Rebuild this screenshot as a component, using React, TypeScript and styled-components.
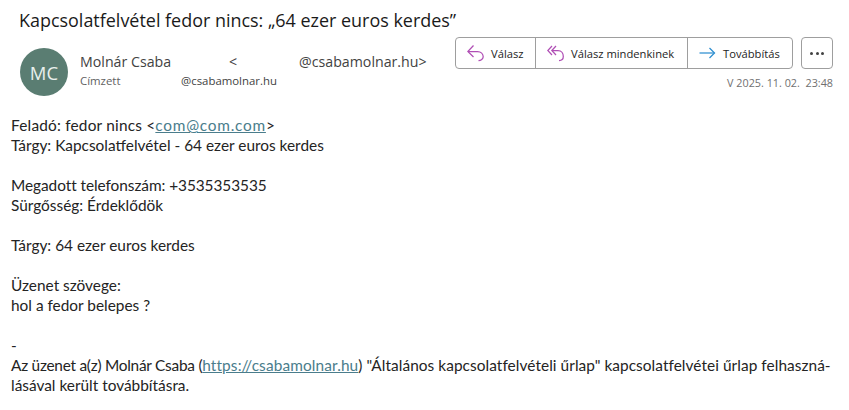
import React from 'react';
import styled, { createGlobalStyle } from 'styled-components';

const GlobalStyle = createGlobalStyle`
  html, body {
    margin: 0;
    padding: 0;
    background: #fff;
  }
`;

const Page = styled.div`
  width: 849px;
  height: 410px;
  overflow: hidden;
  font-family: 'Open Sans', 'Noto Sans', sans-serif;
  color: #242424;
`;

const Subject = styled.h1`
  margin: 0;
  padding: 8px 0 0 19px;
  height: 37px;
  box-sizing: border-box;
  font-size: 17.95px;
  line-height: 24px;
  font-weight: 400;
  color: #1a1a1a;
  white-space: nowrap;
`;

const Header = styled.div`
  display: flex;
  padding: 0 16px 0 20px;
`;

const Avatar = styled.div`
  width: 48px;
  height: 48px;
  margin-top: 11px;
  border-radius: 50%;
  background: #5a7d72;
  color: #e8efec;
  display: flex;
  align-items: center;
  justify-content: center;
  font-size: 18.5px;
  flex: none;
`;

const Meta = styled.div`
  margin-left: 12px;
  padding-top: 15px;
  flex: 1;
`;

const SenderRow = styled.div`
  display: flex;
  font-size: 14.2px;
  line-height: 20px;
  color: #424242;
  white-space: nowrap;
`;

const SenderName = styled.span`
  width: 149px;
`;

const SenderAngle = styled.span`
  width: 70px;
`;

const RecipientRow = styled.div`
  display: flex;
  font-size: 11.4px;
  line-height: 16px;
  margin-top: 1px;
  white-space: nowrap;
`;

const RecipientLabel = styled.span`
  width: 101px;
  color: #616161;
`;

const RecipientMail = styled.span`
  color: #424242;
`;

const Side = styled.div`
  display: flex;
  flex-direction: column;
  align-items: flex-end;
`;

const Actions = styled.div`
  display: flex;
  gap: 8px;
`;

const ButtonGroup = styled.div`
  display: flex;
  height: 32px;
  box-sizing: border-box;
  border: 1px solid #9e9e9e;
  border-radius: 4px;
`;

const ActionButton = styled.div<{ $width: number }>`
  width: ${p => p.$width}px;
  display: flex;
  align-items: center;
  gap: 6px;
  padding-left: 11px;
  box-sizing: border-box;
  font-size: 11.2px;
  color: #242424;
  white-space: nowrap;

  & + & {
    border-left: 1px solid #9e9e9e;
  }
`;

const MoreButton = styled.div`
  width: 32px;
  height: 32px;
  box-sizing: border-box;
  border: 1px solid #9e9e9e;
  border-radius: 4px;
  display: flex;
  align-items: center;
  justify-content: center;
  gap: 2.5px;
`;

const Dot = styled.span`
  width: 3px;
  height: 3px;
  border-radius: 50%;
  background: #424242;
`;

const Timestamp = styled.div`
  margin-top: 6px;
  font-size: 10.8px;
  line-height: 16px;
  color: #707070;
  white-space: pre;
`;

const Body = styled.div`
  padding: 19px 0 0 11px;
  font-family: 'Lato', 'Inter', sans-serif;
  font-size: 15.4px;
  line-height: 20px;
  color: #242424;
`;

const Para = styled.p`
  margin: 0 0 20px;
  white-space: nowrap;
`;

const Run = styled.span<{ $spacing: number }>`
  letter-spacing: ${p => p.$spacing}px;
`;

const MailLink = styled.a<{ $spacing: number }>`
  color: #4a7d8c;
  text-decoration: underline;
  letter-spacing: ${p => p.$spacing}px;
`;

const ReplyIcon = () => (
  <svg width="18" height="18" viewBox="0 0 18 18" fill="none" stroke="#b04fb5" strokeWidth="1.25">
    <path d="M6.5 1.5 L0.8 7.5 L6.5 13" />
    <path d="M1 7.5 H10.5 C14 7.5 16.2 10 16.2 12.8 C16.2 14.8 14 16.5 11.5 16.5" />
  </svg>
);

const ReplyAllIcon = () => (
  <svg width="18" height="18" viewBox="0 0 18 18" fill="none" stroke="#b04fb5" strokeWidth="1.25">
    <path d="M5 2 L0.8 6.5 L5 11" />
    <path d="M9 2 L4.8 6.5 L9 11" />
    <path d="M5 6.5 H11 C14.5 6.5 16.3 9.5 16.3 12.5 C16.3 14.8 14.5 16.5 12 16.5" />
  </svg>
);

const ForwardIcon = () => (
  <svg width="18" height="18" viewBox="0 0 18 18" fill="none" stroke="#2f8fd0" strokeWidth="1.25">
    <path d="M0.5 9 H15.5" />
    <path d="M10.5 4 L15.5 9 L10.5 14" />
  </svg>
);

export default function App() {
  return (
    <Page>
      <GlobalStyle />
      <Subject>Kapcsolatfelvétel fedor nincs: „64 ezer euros kerdes”</Subject>
      <Header>
        <Avatar>MC</Avatar>
        <Meta>
          <SenderRow>
            <SenderName>Molnár Csaba</SenderName>
            <SenderAngle>&lt;</SenderAngle>
            <span>@csabamolnar.hu&gt;</span>
          </SenderRow>
          <RecipientRow>
            <RecipientLabel>Címzett</RecipientLabel>
            <RecipientMail>@csabamolnar.hu</RecipientMail>
          </RecipientRow>
        </Meta>
        <Side>
          <Actions>
            <ButtonGroup>
              <ActionButton $width={79}><ReplyIcon />Válasz</ActionButton>
              <ActionButton $width={152}><ReplyAllIcon />Válasz mindenkinek</ActionButton>
              <ActionButton $width={105}><ForwardIcon />Továbbítás</ActionButton>
            </ButtonGroup>
            <MoreButton><Dot /><Dot /><Dot /></MoreButton>
          </Actions>
          <Timestamp>V 2025. 11. 02.  23:48</Timestamp>
        </Side>
      </Header>
      <Body>
        <Para>
          <Run $spacing={0.2}>Feladó: fedor nincs &lt;</Run><MailLink href="#" $spacing={0.75}>com@com.com</MailLink>&gt;<br />
          Tárgy: Kapcsolatfelvétel - 64 ezer euros kerdes
        </Para>
        <Para>
          <Run $spacing={-0.06}>Megadott telefonszám: +3535353535</Run><br />
          Sürgősség: Érdeklődök
        </Para>
        <Para>Tárgy: 64 ezer euros kerdes</Para>
        <Para>
          Üzenet szövege:<br />
          hol a fedor belepes ?
        </Para>
        <Para>
          -<br />
          <Run $spacing={-0.25}>Az üzenet a(z) Molnár Csaba (</Run><MailLink href="#" $spacing={0.12}>https://csabamolnar.hu</MailLink><Run $spacing={0.06}>) "Általános kapcsolatfelvételi űrlap" kapcsolatfelvétei űrlap felhaszná-</Run><br />
          lásával került továbbításra.
        </Para>
      </Body>
    </Page>
  );
}
